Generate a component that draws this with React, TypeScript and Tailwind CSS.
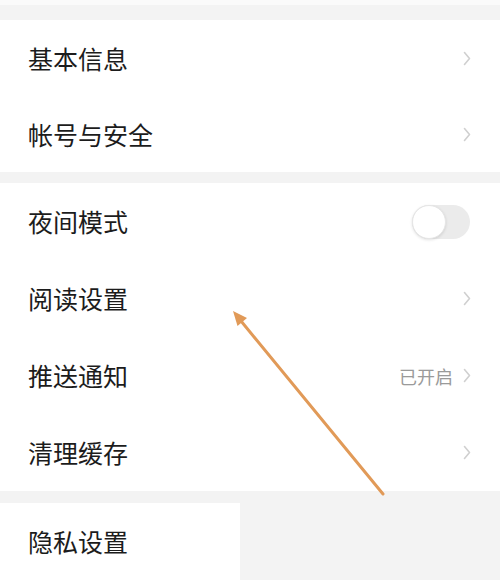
import React from "react";

const Chevron = () => (
  <svg width="8" height="15" viewBox="0 0 8 15" className="shrink-0">
    <path d="M1.5 1.5 L6.5 7.5 L1.5 13.5" fill="none" stroke="#d0d0d0" strokeWidth="1.6" strokeLinecap="round" strokeLinejoin="round" />
  </svg>
);

const Row = ({ label, right, h = "h-[76px]" }: { label: string; right?: React.ReactNode; h?: string }) => (
  <div className={`flex items-center justify-between pl-[28px] pr-[29px] ${h}`}>
    <span className="text-[25px] leading-none text-[#1c1c1c]">{label}</span>
    {right ?? <Chevron />}
  </div>
);

export default function App() {
  return (
    <div
      className="relative w-[500px] h-[587px] overflow-hidden bg-white"
      style={{ fontFamily: '"Noto Sans CJK SC", "Noto Sans", sans-serif' }}
    >
      <div className="h-[5px] bg-[#fafafa]" />
      <div className="h-[15px] bg-[#f3f3f3]" />
      <div className="bg-white">
        <Row label="基本信息" />
        <Row label="帐号与安全" />
      </div>
      <div className="h-[11px] bg-[#f3f3f3]" />
      <div className="bg-white">
        <Row
          label="夜间模式"
          h="h-[77px]"
          right={
            <div className="relative mr-[1px] h-[34px] w-[58px] rounded-full bg-[#ebebeb]">
              <div className="absolute left-0 top-0 h-[34px] w-[34px] rounded-full border border-[#e6e6e6] bg-white shadow-[0_1px_3px_rgba(0,0,0,0.12)]" />
            </div>
          }
        />
        <Row label="阅读设置" h="h-[77px]" />
        <Row
          label="推送通知"
          h="h-[77px]"
          right={
            <div className="flex items-center gap-[10px]">
              <span className="text-[18px] leading-none text-[#9a9a9a]">已开启</span>
              <Chevron />
            </div>
          }
        />
        <Row label="清理缓存" h="h-[77px]" />
      </div>
      <div className="h-[12px] bg-[#f3f3f3]" />
      <div className="flex h-[77px]">
        <div className="flex w-[240px] items-center bg-white pl-[28px]">
          <span className="text-[25px] leading-none text-[#1c1c1c]">隐私设置</span>
        </div>
        <div className="flex-1 bg-[#f3f3f3]" />
      </div>

      <svg className="pointer-events-none absolute left-0 top-0" width="500" height="587" viewBox="0 0 500 587">
        <line x1="383" y1="494" x2="241" y2="321" stroke="#e19a58" strokeWidth="3" strokeLinecap="round" />
        <polygon points="233,311 247,318 237.5,326" fill="#e19a58" />
      </svg>
    </div>
  );
}
